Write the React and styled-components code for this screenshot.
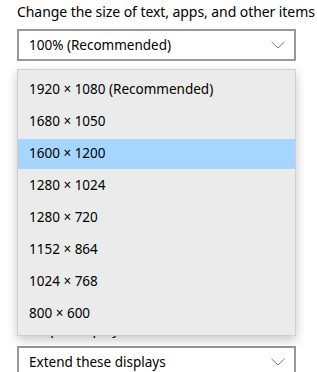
import React from "react";
import styled, { createGlobalStyle } from "styled-components";

const Global = createGlobalStyle`
  html, body {
    margin: 0;
    padding: 0;
    background: #ffffff;
  }
  body {
    font-family: "Noto Sans", "Open Sans", Arial, sans-serif;
    color: #000000;
    overflow: hidden;
  }
`;

const Page = styled.div`
  position: relative;
  width: 317px;
  height: 372px;
  padding: 0 21px 0 17px;
  box-sizing: border-box;
  display: flex;
  flex-direction: column;
`;

const Label = styled.div`
  font-size: 14px;
  line-height: 20px;
  letter-spacing: -0.07px;
  margin-top: ${(p) => p.top || 0}px;
  white-space: nowrap;
  flex-shrink: 0;
`;

const Select = styled.div`
  height: 32px;
  margin-top: ${(p) => p.top || 0}px;
  border: 2px solid #999999;
  box-sizing: border-box;
  display: flex;
  align-items: center;
  justify-content: space-between;
  padding: 0 9px 1px 10px;
  font-size: 13.5px;
  flex-shrink: 0;
`;

const Spacer = styled.div`
  height: ${(p) => p.h}px;
  flex-shrink: 0;
`;

const Menu = styled.div`
  position: absolute;
  left: 17px;
  top: 69px;
  width: 279px;
  box-sizing: border-box;
  padding: 4px 0 5px;
  background: #ebebeb;
  border: 1px solid #cfcfcf;
  box-shadow: 0 4px 10px rgba(0, 0, 0, 0.22);
  display: flex;
  flex-direction: column;
`;

const Item = styled.div`
  height: 30px;
  margin: 1px 0;
  display: flex;
  align-items: center;
  padding: 0 0 2px 11px;
  box-sizing: border-box;
  font-size: 13.5px;
  background: ${(p) => (p.active ? "#a6d6ff" : "transparent")};
`;

const Chevron = () => (
  <svg width="14" height="8" viewBox="0 0 14 8">
    <path d="M0.5 0.8 L7 7 L13.5 0.8" fill="none" stroke="#7a7a7a" strokeWidth="1" />
  </svg>
);

const resolutions = [
  "1920 × 1080 (Recommended)",
  "1680 × 1050",
  "1600 × 1200",
  "1280 × 1024",
  "1280 × 720",
  "1152 × 864",
  "1024 × 768",
  "800 × 600",
];

export default function App() {
  return (
    <>
      <Global />
      <Page>
        <Label top={2}>Change the size of text, apps, and other items</Label>
        <Select top={7}>
          <span>100% (Recommended)</span>
          <Chevron />
        </Select>
        <Spacer h={258} />
        <Label>Multiple displays</Label>
        <Select top={7}>
          <span>Extend these displays</span>
          <Chevron />
        </Select>
        <Menu>
          {resolutions.map((r) => (
            <Item key={r} active={r === "1600 × 1200"}>
              {r}
            </Item>
          ))}
        </Menu>
      </Page>
    </>
  );
}
